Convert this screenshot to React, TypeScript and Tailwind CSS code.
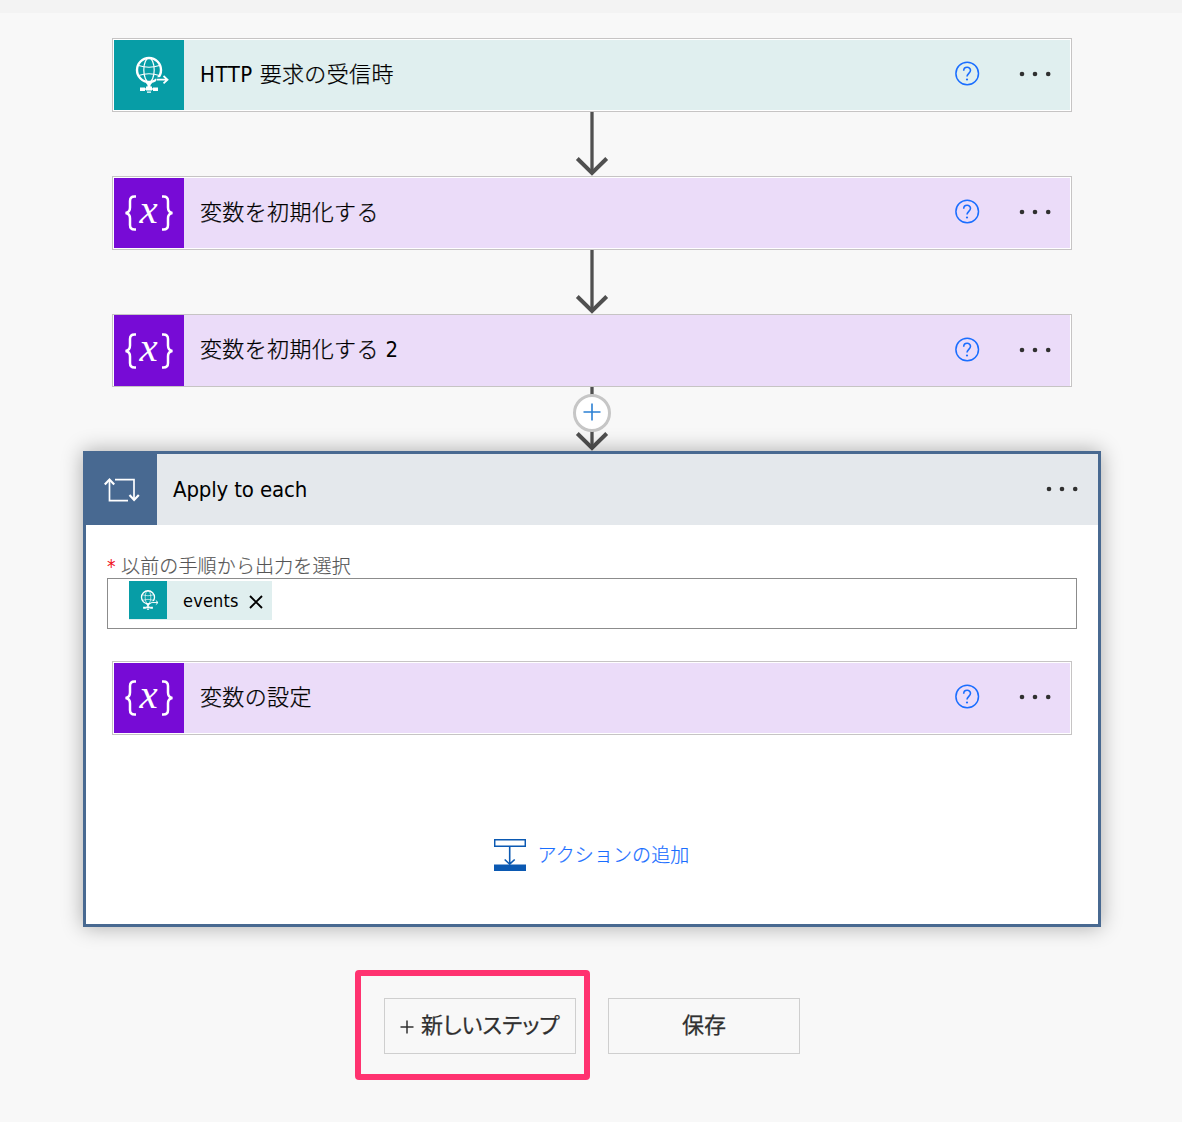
import React from "react";

const jp = "font-['DejaVu_Sans_Condensed','DejaVu_Sans','Noto_Sans_CJK_JP',sans-serif] font-stretch-condensed";

function GlobeIcon({ className }: { className: string }) {
  return (
    <svg viewBox="0 0 70 70" className={className} fill="none" stroke="#fff">
      <circle cx="35" cy="30" r="12" strokeWidth="2.400" />
      <ellipse cx="35" cy="30" rx="5.200" ry="12" strokeWidth="1.200" />
      <path d="M24.500 25.500q10.500 3.500 21 0M24.500 35.500q10.500-3.500 21 0" strokeWidth="1.200" />
      <path d="M42 39.700h12" stroke="#079da6" strokeWidth="5" />
      <path d="M42.500 39.700h10.500M49.500 36l4 3.700-4 3.700" strokeWidth="1.800" />
      <path d="M31.500 42.500h7l-2 2.500v2h-3v-2z" fill="#fff" stroke="none" />
      <path d="M26 47.500h5v3.500h-5zM39 47.500h5v3.500h-5zM32 46.500h6v4h-6zM33 51.500h4v1.300h-4z" fill="#fff" stroke="none" />
      <path d="M30 49h10" strokeWidth="1.500" />
    </svg>
  );
}

function VariableIcon() {
  return (
    <svg viewBox="0 0 70 70" className="size-[70px]" fill="none" stroke="#fff" strokeWidth="2.500">
      <path d="M22 18.500h-1.500q-4.500 0-4.500 4.500v6.500q0 5-4.500 5.500q4.500.5 4.500 5.500v6.500q0 4.500 4.500 4.500h1.500" />
      <path d="M48 18.500h1.500q4.500 0 4.500 4.500v6.500q0 5 4.500 5.500q-4.500.5-4.500 5.500v6.500q0 4.500-4.500 4.500h-1.500" />
      <text x="34.700" y="44.700" textAnchor="middle" fill="#fff" stroke="none" className="font-['Liberation_Serif',serif] text-[41px] italic">x</text>
    </svg>
  );
}

function Dots({ className = "-mt-[2px]" }: { className?: string }) {
  return (
    <svg viewBox="0 0 34 6" className={`h-[6px] w-[34px] shrink-0 ${className}`} fill="#303030">
      <circle cx="4" cy="3" r="2.300" />
      <circle cx="17" cy="3" r="2.300" />
      <circle cx="30.200" cy="3" r="2.300" />
    </svg>
  );
}

function Help() {
  return (
    <svg viewBox="0 0 26 26" className="-mt-[2px] mr-[38px] size-[26px] shrink-0" fill="none" stroke="#1a6eff">
      <circle cx="13.200" cy="12.500" r="11.300" strokeWidth="1.500" />
      <path d="M9.700 9.700c0-4.400 6.800-4.500 6.800-.4c0 2.900-3.500 3.200-3.500 6.300" strokeWidth="1.600" />
      <circle cx="13" cy="18.500" r="1.100" fill="#1a6eff" stroke="none" />
    </svg>
  );
}

type CardProps = { title: React.ReactNode; http?: boolean; short?: boolean };

function StepCard({ title, http, short }: CardProps) {
  return (
    <div className={`flex w-[960px] shrink-0 border border-[#c6c4c4] bg-white px-px ${short ? "h-[73px]" : "h-[74px] py-px"}`}>
      <div className={`flex w-[70px] shrink-0 items-center justify-center overflow-hidden ${http ? "bg-[#079da6]" : "bg-[#770bd6]"}`}>
        {http ? <GlobeIcon className="size-[70px]" /> : <VariableIcon />}
      </div>
      <div className={`flex min-w-0 flex-1 items-center pr-[18px] pl-4 ${http ? "bg-[#e0efef]" : "bg-[#ebdcf9]"}`}>
        <span className={`flex-1 text-[22px] leading-8 font-light tracking-[0.35px] whitespace-pre text-black [-webkit-text-stroke:0.25px] ${short ? "pb-px" : ""}`}>{title}</span>
        <Help />
        <Dots className={short ? "-mt-px" : "-mt-[2px]"} />
      </div>
    </div>
  );
}

function Arrow({ children }: { children?: React.ReactNode }) {
  return (
    <div className="relative flex h-16 w-10 shrink-0 justify-center">
      <svg viewBox="0 0 40 64" className="h-16 w-10" fill="none" stroke="#505050">
        <path d="M20 0v61" strokeWidth="3.300" />
        <path d="M5.300 46.500L20 61L34.700 46.500" strokeWidth="4" />
      </svg>
      {children}
    </div>
  );
}

export default function App() {
  return (
    <div className={`flex h-[1122px] w-[1182px] flex-col bg-[#f8f8f8] ${jp}`}>
      <div className="h-[13px] shrink-0 bg-[#f3f3f3]" />
      <main className="flex flex-col items-center pt-[25px] pl-[2px]">
        <StepCard title={<><span className="font-normal tracking-[0.550px] [-webkit-text-stroke:0]">HTTP </span>要求の受信時</>} http />
        <Arrow />
        <StepCard title="変数を初期化する" />
        <Arrow />
        <StepCard title={<>変数を初期化する<span className="font-normal [-webkit-text-stroke:0]"> 2</span></>} short />
        <Arrow>
          <div className="absolute top-[7px] left-[1px] flex size-[38px] items-center justify-center rounded-full border-[3px] border-[#c6c6c6] bg-white">
            <svg viewBox="0 0 18 18" className="-mt-[2px] size-[18px]" stroke="#2b80d4" strokeWidth="1.600">
              <path d="M9 .5v17M.5 9h17" />
            </svg>
          </div>
        </Arrow>

        <section className="relative flex h-[476px] w-[1018px] flex-col border-[3px] border-[#486991] bg-white shadow-[0_0_20px_rgba(0,0,0,0.32)]">
          <header className="flex h-[71px] shrink-0 items-center bg-[#e4e8ec] pr-[19px]">
            <div className="flex h-full w-[71px] items-center justify-center bg-[#486991]">
              <svg viewBox="0 0 36 26" className="h-[26px] w-[36px]" fill="none" stroke="#fff" strokeWidth="1.700">
                <path d="M11 2.700h19v19M24 23.700H5.500v-20" />
                <path d="M.8 7.500l4.700-5 4.700 5M25.500 18l4.600 5 4.700-5" strokeWidth="2.200" />
              </svg>
            </div>
            <h2 className="flex-1 pl-4 text-[22px] leading-8 font-normal tracking-[-0.15px] text-black">Apply to each</h2>
            <Dots className="-mt-px" />
          </header>
          <div className="flex flex-col items-center pt-[27px]">
            <div className="flex h-[26px] w-[970px] items-center pt-px text-[19px] leading-[26px] font-light text-[#555]">
              <span className="mr-[4px] w-[10px] text-[#f01020]">*</span>
              <span className="tracking-[0.15px] [-webkit-text-stroke:0.15px]">以前の手順から出力を選択</span>
            </div>
            <div className="flex h-[51px] w-[970px] border border-[#8c8c8c] pt-[2px] pl-[21px]">
              <div className="flex h-[39px] w-[143px] items-center bg-[#e0efef]">
                <div className="flex h-full w-[38px] pb-px">
                  <GlobeIcon className="size-[38px] bg-[#079da6]" />
                </div>
                <span className="w-[58px] pl-4 text-[18px] leading-6 tracking-[0.2px] whitespace-nowrap text-black">events</span>
                <svg viewBox="0 0 14 14" className="mt-[3px] ml-6 size-[14px]" stroke="#000" strokeWidth="1.900">
                  <path d="M1 1l12 12M13 1L1 13" />
                </svg>
              </div>
            </div>
            <div className="mt-8">
              <StepCard title="変数の設定" />
            </div>
            <div className="mt-[104px] flex h-8 items-center gap-3 pr-px">
              <svg viewBox="0 0 32 32" className="size-8" fill="none" stroke="#0b59b2">
                <path d="M.7.700h30.600v6.600H.700z" strokeWidth="1.500" />
                <path d="M15.700 8v17M10.700 20.500l5 4.700 5-4.700" strokeWidth="1.600" />
                <path d="M0 25.500h32V32H0z" fill="#0b59b2" stroke="none" />
              </svg>
              <span className="text-[19px] leading-8 font-light tracking-[0.1px] text-[#1a6eff] [-webkit-text-stroke:0.2px]">アクションの追加</span>
            </div>
          </div>
        </section>
      </main>
      <div className="mt-[43px] flex pl-[355px] text-[22px] text-[#303030]">
        <div className="flex h-[110px] w-[235px] rounded-[4px] border-[6px] border-[#ff3370] pt-[22px] pl-[23px]">
          <button className="flex h-14 w-48 items-center border border-[#cfcfcf] pb-px pl-[15px] leading-8 whitespace-nowrap [-webkit-text-stroke:0.25px]">
            <svg viewBox="0 0 14 14" className="mt-[3px] mr-[7px] size-[14px] shrink-0" stroke="#303030" strokeWidth="1.500"><path d="M7 .5v13M.5 7h13" /></svg>
            <span className="[font-feature-settings:'palt']">新しいステップ</span>
          </button>
        </div>
        <button className="mt-[28px] ml-[18px] h-14 w-48 border border-[#cfcfcf] pb-px leading-8 [-webkit-text-stroke:0.25px]">保存</button>
      </div>
    </div>
  );
}
